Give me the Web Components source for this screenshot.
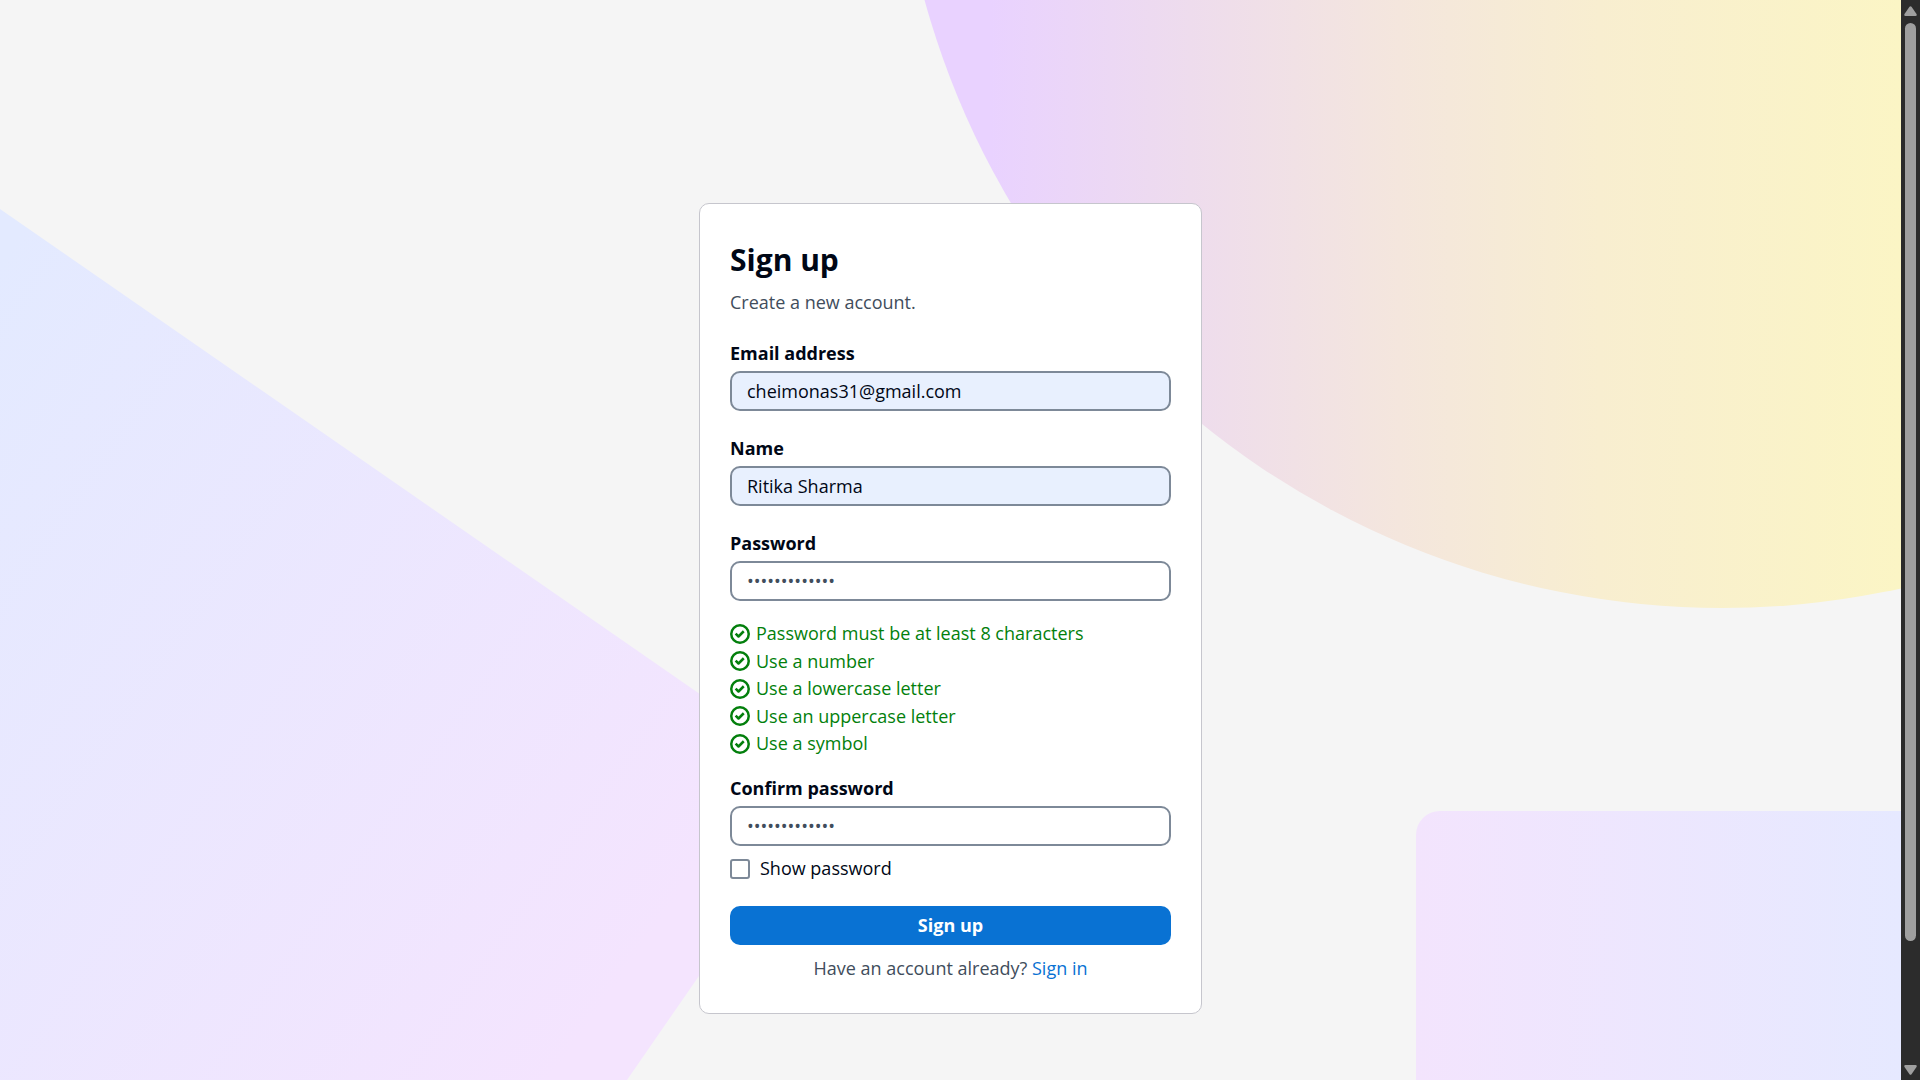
<!DOCTYPE html>
<html lang="en">
<head>
<meta charset="utf-8">
<title>Sign up</title>
<style>
  html, body { margin: 0; height: 100%; }
  body {
    overflow: hidden;
    font: 18px/25px "Open Sans", "Noto Sans", sans-serif;
    color: #000716;
    background: #f5f5f5;
  }
</style>
</head>
<body>
<app-shell>
  <scene-backdrop slot="backdrop"></scene-backdrop>
  <auth-card></auth-card>
  <scroll-rail slot="rail"></scroll-rail>
</app-shell>

<script>
  const define = (name, html, setup) => {
    const template = document.createElement('template');
    template.innerHTML = html;
    customElements.define(name, class extends HTMLElement {
      constructor() {
        super();
        this.attachShadow({ mode: 'open' }).append(template.content.cloneNode(true));
      }
      connectedCallback() {
        if (setup) setup(this, this.shadowRoot);
      }
    });
  };

  define('app-shell', `
    <style>
      :host { display: flex; height: 100vh; overflow: hidden; }
      .view { position: relative; flex: 1; min-width: 0; overflow: hidden; }
      main { position: relative; display: flex; justify-content: center; padding-block: 203px; }
    </style>
    <div class="view">
      <slot name="backdrop"></slot>
      <main><slot></slot></main>
    </div>
    <slot name="rail"></slot>`);

  define('scene-backdrop', `
    <style>
      :host { position: absolute; inset: 0; }
      svg { display: block; width: 100%; height: 100%; }
    </style>
    <svg viewBox="0 0 1901 1080" preserveAspectRatio="xMidYMin slice" aria-hidden="true">
      <defs>
        <linearGradient id="sun" gradientUnits="userSpaceOnUse" x1="990" y1="0" x2="1900" y2="0">
          <stop offset="0" stop-color="#e9d2ff"/>
          <stop offset=".22" stop-color="#eedced"/>
          <stop offset=".45" stop-color="#f4e6dd"/>
          <stop offset=".67" stop-color="#f8eed0"/>
          <stop offset="1" stop-color="#fbf5c5"/>
        </linearGradient>
        <linearGradient id="slab" gradientUnits="userSpaceOnUse" x1="0" y1="260" x2="755" y2="788">
          <stop offset="0" stop-color="#e3eaff"/><stop offset="1" stop-color="#f4e4fe"/>
        </linearGradient>
        <linearGradient id="tile" gradientUnits="userSpaceOnUse" x1="1416" y1="0" x2="1901" y2="0">
          <stop offset="0" stop-color="#f3e4fd"/><stop offset="1" stop-color="#e6e9ff"/>
        </linearGradient>
      </defs>
      <circle cx="1722" cy="-219" r="827" fill="url(#sun)"/>
      <path d="M0 209 L831 785 L627 1080 H0 Z" fill="url(#slab)"/>
      <rect x="1416" y="811" width="560" height="500" rx="24" fill="url(#tile)"/>
    </svg>`);

  define('scroll-rail', `
    <style>
      :host {
        display: flex; flex-direction: column; align-items: center; gap: 7px;
        box-sizing: border-box; width: 19px; padding-block: 6px 5px; background: #2c2c2c;
      }
      svg { display: block; width: 13px; height: 10px; fill: #9f9f9f; }
      .track { flex: 1; width: 11px; }
      .thumb { height: 88.7%; border-radius: 6px; background: #9f9f9f; }
    </style>
    <svg viewBox="0 0 13 10"><path d="M5.5 .8Q6.5-.5 7.500 .8L12.500 8Q13.300 10 11.500 10H1.500Q-.3 10 .5 8Z"/></svg>
    <div class="track"><div class="thumb"></div></div>
    <svg viewBox="0 0 13 10"><path d="M5.5 9.200Q6.500 10.500 7.500 9.200L12.500 2Q13.300 0 11.500 0H1.500Q-.3 0 .5 2Z"/></svg>`);

  define('text-field', `
    <style>
      :host { display: flex; flex-direction: column; gap: 5px; }
      label { font-weight: 700; }
      input {
        box-sizing: border-box; width: 100%; height: 40px; margin: 0; padding: 0 15px;
        border: 2px solid #7d8998; border-radius: 10px; outline: 0;
        background: #fff; color: inherit; font: inherit;
      }
      input[type="password"] { color: #414d5c; }
      :host([filled]) input { background: #e8f0fe; }
    </style>
    <label for="box"></label>
    <input id="box">`,
    (host, root) => {
      root.querySelector('label').textContent = host.getAttribute('label');
      const input = root.querySelector('input');
      input.type = host.getAttribute('type') || 'text';
      input.value = host.getAttribute('value') || '';
    });

  define('rule-item', `
    <style>
      :host { display: flex; align-items: center; gap: 6px; color: #037f0c; }
      svg { flex: none; width: 20px; height: 20px; fill: none; stroke: currentColor; stroke-width: 2; }
    </style>
    <svg viewBox="0 0 16 16" aria-hidden="true">
      <circle cx="8" cy="8" r="7"/>
      <path d="m4.500 7.700 2.300 2.300 4.200-4.200" stroke-linejoin="round"/>
    </svg>
    <span><slot></slot></span>`);

  define('check-field', `
    <style>
      :host { display: flex; }
      label { display: flex; align-items: center; gap: 10px; }
      input {
        appearance: none; box-sizing: border-box; width: 20px; height: 20px; margin: 0;
        border: 2px solid #7d8998; border-radius: 3px; background: #fff;
      }
      input:checked { background: #0972d3; border-color: #0972d3; }
    </style>
    <label><input type="checkbox"><span><slot></slot></span></label>`);

  define('action-button', `
    <style>
      :host { display: block; }
      button {
        display: block; width: 100%; height: 39px; padding: 0; border: 0; border-radius: 10px;
        background: #0972d3; color: #fff; font: inherit; font-weight: 700; cursor: pointer;
      }
    </style>
    <button type="button"><slot></slot></button>`);

  define('auth-card', `
    <style>
      :host {
        display: flex; flex-direction: column; box-sizing: border-box;
        width: 503px; padding: 36px 30px 32px;
        border: 1px solid #c6c6cd; border-radius: 10px; background: #fff;
      }
      h1 { margin: 0; font-size: 30px; line-height: 40px; }
      p { margin: 0; color: #414d5c; }
      header { display: flex; flex-direction: column; gap: 10px; }
      form { display: flex; flex-direction: column; gap: 25px; margin-top: 26px; }
      .secret { display: flex; flex-direction: column; gap: 20px; }
      .rules {
        display: flex; flex-direction: column; justify-content: space-between;
        height: 135px;
      }
      .confirm { display: flex; flex-direction: column; gap: 10px; }
      .submit { display: flex; flex-direction: column; gap: 11px; }
      .submit p { text-align: center; }
      a { color: #0972d3; text-decoration: none; }
    </style>
    <header>
      <h1>Sign up</h1>
      <p>Create a new account.</p>
    </header>
    <form>
      <text-field label="Email address" type="email" value="cheimonas31@gmail.com" filled></text-field>
      <text-field label="Name" value="Ritika Sharma" filled></text-field>
      <div class="secret">
        <text-field label="Password" type="password" value="Abcdefgh1234!"></text-field>
        <div class="rules">
          <rule-item>Password must be at least 8 characters</rule-item>
          <rule-item>Use a number</rule-item>
          <rule-item>Use a lowercase letter</rule-item>
          <rule-item>Use an uppercase letter</rule-item>
          <rule-item>Use a symbol</rule-item>
        </div>
        <div class="confirm">
          <text-field label="Confirm password" type="password" value="Abcdefgh1234!"></text-field>
          <check-field>Show password</check-field>
        </div>
      </div>
      <div class="submit">
        <action-button>Sign up</action-button>
        <p>Have an account already? <a href="#signin">Sign in</a></p>
      </div>
    </form>`,
    (host, root) => {
      const toggle = root.querySelector('check-field');
      const secrets = root.querySelectorAll('text-field[type="password"]');
      toggle.addEventListener('click', () => {
        const shown = toggle.shadowRoot.querySelector('input').checked;
        secrets.forEach(f => { f.shadowRoot.querySelector('input').type = shown ? 'text' : 'password'; });
      });
    });
</script>
</body>
</html>
